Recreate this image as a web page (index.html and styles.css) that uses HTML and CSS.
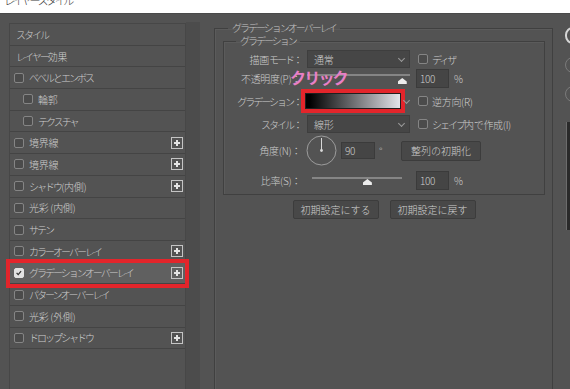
FILE: index.html
```html
<!DOCTYPE html>
<html lang="ja">
<head>
    <meta charset="UTF-8">
    <title>レイヤースタイル</title>
    <link rel="stylesheet" href="styles.css">
</head>
<body>
    <div class="titlebar"><span>レイヤースタイル</span></div>

    <div class="dialog">
        <aside class="sidebar">
            <ul class="fx-list">
                <li class="fx head">スタイル</li>
                <li class="fx head">レイヤー<span class="kj">効果</span></li>
                <li class="fx"><span class="cb"></span>ベベルとエンボス</li>
                <li class="fx sub"><span class="cb"></span><span class="kj">輪郭</span></li>
                <li class="fx sub"><span class="cb"></span>テクスチャ</li>
                <li class="fx"><span class="cb"></span><span class="kj">境界線</span><span class="plus"></span></li>
                <li class="fx"><span class="cb"></span><span class="kj">境界線</span><span class="plus"></span></li>
                <li class="fx"><span class="cb"></span><span>シャドウ <span class="kj">(内側)</span></span><span class="plus"></span></li>
                <li class="fx"><span class="cb"></span><span class="kj">光彩 (内側)</span></li>
                <li class="fx"><span class="cb"></span>サテン</li>
                <li class="fx"><span class="cb"></span>カラーオーバーレイ<span class="plus"></span></li>
                <li class="fx selected"><span class="cb checked"></span>グラデーションオーバーレイ<span class="plus"></span></li>
                <li class="fx"><span class="cb"></span>パターンオーバーレイ</li>
                <li class="fx"><span class="cb"></span><span class="kj">光彩 (外側)</span></li>
                <li class="fx"><span class="cb"></span>ドロップシャドウ<span class="plus"></span></li>
            </ul>
            <div class="gutter"></div>
        </aside>

        <main class="panel">
            <fieldset class="group outer">
                <legend class="kn">グラデーションオーバーレイ</legend>
                <fieldset class="group inner">
                    <legend class="kn">グラデーション</legend>

                    <div class="row r-mode">
                        <label class="lbl">描画<span class="kn">モード：</span></label>
                        <div class="select">通常<span class="chev"></span></div>
                        <span class="cb right"></span><span class="kn">ディザ</span>
                    </div>

                    <div class="row r-opacity">
                        <label class="lbl">不透明度(P)：</label>
                        <div class="slider wide"><span class="thumb" style="left: 92%"></span></div>
                        <div class="num">100</div>
                        <span class="unit">%</span>
                        <span class="note">クリック</span>
                    </div>

                    <div class="row r-grad">
                        <label class="lbl kn">グラデーション：</label>
                        <div class="grad-slot">
                            <div class="swatch"></div>
                            <span class="chev"></span>
                        </div>
                        <span class="cb right"></span><span>逆方向(R)</span>
                    </div>

                    <div class="row r-style">
                        <label class="lbl kn">スタイル：</label>
                        <div class="select">線形<span class="chev"></span></div>
                        <span class="cb right"></span><span><span class="kn">シェイプ</span>内で作成(I)</span>
                    </div>

                    <div class="row r-angle">
                        <label class="lbl">角度(N)：</label>
                        <svg class="dial" width="31" height="31" viewBox="0 0 31 31">
                            <circle cx="15.5" cy="15.5" r="14.5" fill="none" stroke="#9c9c9c" stroke-width="1"/>
                            <line x1="15.5" y1="15.5" x2="15.5" y2="3" stroke="#d8d8d8" stroke-width="1"/>
                            <circle cx="15.5" cy="15.5" r="1.4" fill="#d8d8d8"/>
                        </svg>
                        <div class="num angle">90</div>
                        <span class="deg">°</span>
                        <button class="btn reset">整列の初期化</button>
                    </div>

                    <div class="row r-scale">
                        <label class="lbl">比率(S)：</label>
                        <div class="slider narrow"><span class="thumb" style="left: 61%"></span></div>
                        <div class="num">100</div>
                        <span class="unit">%</span>
                    </div>
                </fieldset>

                <div class="defaults">
                    <button class="btn">初期設定にする</button>
                    <button class="btn">初期設定に戻す</button>
                </div>
            </fieldset>
        </main>

        <div class="side">
            <div class="side-btn ok"></div>
            <div class="side-btn"></div>
            <div class="side-btn"></div>
            <div class="preview"></div>
        </div>
    </div>
</body>
</html>
```

FILE: styles.css
```css
* {
    box-sizing: border-box;
}
body {
    margin: 0;
    width: 570px;
    height: 389px;
    overflow: hidden;
    background: #535353;
    font-family: "Noto Sans CJK JP", "Noto Sans", sans-serif;
    font-size: 10px;
    font-weight: 300;
    color: #cdcdcd;
    letter-spacing: -0.3px;
}
/* katakana runs are set much narrower than kanji in the original UI font */
.kn {
    letter-spacing: -2px;
}
.kj {
    letter-spacing: -0.3px;
}
.titlebar {
    height: 14px;
    background: #fff;
    overflow: hidden;
    padding-left: 4px;
    border-bottom: 1px solid #4a4a4a;
}
.titlebar span {
    display: block;
    margin-top: -7px;
    font-size: 11px;
    line-height: 14px;
    color: #3c3c3c;
    letter-spacing: -2.4px;
}
.dialog {
    display: flex;
    height: 375px;
}

/* effects list */
.sidebar {
    width: 200px;
    display: flex;
    padding: 9px 0 0 9px;
    flex-shrink: 0;
}
.fx-list {
    list-style: none;
    margin: 0;
    padding: 0;
    width: 177px;
    border: 1px solid #474747;
    border-bottom: none;
}
.fx {
    height: 21.7px;
    display: flex;
    align-items: center;
    padding: 0 2px 0 4px;
    border-bottom: 1px solid #444;
    white-space: nowrap;
    letter-spacing: -2px;
}
.fx .kj {
    letter-spacing: -0.3px;
}
.fx.head {
    padding-left: 6px;
}
.fx.sub {
    padding-left: 13px;
}
.fx.selected {
    background: #606060;
    outline: 4px solid #e3252b;
    position: relative;
}
.cb {
    width: 10px;
    height: 10px;
    border: 1px solid #858585;
    border-radius: 2px;
    background: #4b4b4b;
    flex-shrink: 0;
}
.fx .cb {
    margin-right: 5px;
}
.cb.checked {
    background: #e2e2e2 url("data:image/svg+xml,%3Csvg xmlns='http://www.w3.org/2000/svg' width='10' height='10'%3E%3Cpath d='M2 4.8 L4 7 L7.6 2.6' fill='none' stroke='%23333' stroke-width='1.6'/%3E%3C/svg%3E") center/8px 8px no-repeat;
    border-color: #e2e2e2;
}
.plus {
    margin-left: auto;
    width: 12px;
    height: 12px;
    border: 1px solid #c4c4c4;
    background:
        linear-gradient(#e4e4e4, #e4e4e4) center/6px 2px no-repeat,
        linear-gradient(#e4e4e4, #e4e4e4) center/2px 6px no-repeat;
}
.gutter {
    width: 14px;
    margin-top: -1px;
    background: #4c4c4c;
}

/* settings panel */
.panel {
    margin: 8px 0 0 14px;
    width: 339px;
    flex-shrink: 0;
}
.group {
    margin: 0;
    border: 1px solid #404040;
    box-shadow: inset 1px 1px 0 #5b5b5b;
}
.group legend {
    line-height: 12px;
    padding: 0 4px;
    color: #c4c4c4;
}
.outer {
    height: 420px;
    padding: 0 7px 0 8px;
}
.outer > legend {
    margin-left: 5px;
}
.inner {
    margin-top: 1px;
    padding: 3px 0 4px 0;
}
.inner > legend {
    margin-left: 12px;
}
.row {
    display: flex;
    align-items: center;
    white-space: nowrap;
}
.lbl {
    width: 81px;
    padding-right: 4px;
    text-align: right;
    flex-shrink: 0;
}
.r-mode, .r-style {
    height: 18px;
}
.r-opacity {
    height: 20px;
    position: relative;
}
.r-grad {
    height: 24px;
    margin-top: 1px;
}
.r-style {
    margin-top: 2px;
}
.r-angle {
    height: 31px;
    margin-top: 2px;
}
.r-scale {
    height: 19px;
    margin-top: 5px;
}
.select {
    margin-left: 2px;
    width: 103px;
    height: 18px;
    background: #464646;
    border: 1px solid #3e3e3e;
    display: flex;
    align-items: center;
    padding-left: 6px;
}
.chev {
    margin-left: auto;
    margin-right: 5px;
    width: 5px;
    height: 5px;
    border-right: 1px solid #9a9a9a;
    border-bottom: 1px solid #9a9a9a;
    transform: translateY(-1px) rotate(45deg);
}
.cb.right {
    margin: 0 4px 0 8px;
}
.slider {
    position: relative;
    height: 100%;
}
.slider::before {
    content: "";
    position: absolute;
    left: 0;
    right: 0;
    top: 6px;
    height: 2px;
    background: #858585;
}
.slider.wide {
    margin-left: 2px;
    width: 103px;
}
.slider.narrow {
    margin-left: 7px;
    width: 90px;
}
.thumb {
    position: absolute;
    top: 10px;
    width: 9px;
    height: 6px;
    margin-left: -4px;
    background: #ececec;
    clip-path: polygon(50% 0, 100% 60%, 100% 100%, 0 100%, 0 60%);
}
.r-scale .thumb {
    top: 8px;
}
.num {
    margin-left: 6px;
    width: 33px;
    height: 19px;
    background: #454545;
    border: 1px solid #3b3b3b;
    padding-left: 3px;
    line-height: 17px;
}
.r-scale .num {
    margin-left: 14px;
}
.num.angle {
    margin-left: 4px;
    width: 34px;
    height: 17px;
    line-height: 15px;
}
.unit {
    margin-left: 5px;
}
.deg {
    margin-left: 4px;
    width: 10px;
}
.note {
    position: absolute;
    left: 66px;
    top: -1px;
    font-size: 16px;
    line-height: 20px;
    font-weight: bold;
    letter-spacing: -1.8px;
    color: #e97fc6;
}
.grad-slot {
    width: 105px;
    display: flex;
    align-items: center;
}
.swatch {
    width: 96px;
    height: 16px;
    border: 1px solid #1f1f1f;
    background: linear-gradient(to right, #000 4%, #e4e4ea 100%);
    outline: 4px solid #e3252b;
}
.grad-slot .chev {
    margin-right: 1px;
}
.dial {
    margin-left: 1px;
}
.btn {
    font: inherit;
    color: #d0d0d0;
    background: #484848;
    border: 1px solid #3c3c3c;
    border-radius: 2px;
    height: 19px;
    padding: 0;
}
.btn.reset {
    margin-left: 12px;
    width: 80px;
    height: 20px;
}
.defaults {
    display: flex;
    justify-content: center;
    gap: 11px;
    margin-top: 5px;
}
.defaults .btn {
    width: 86px;
}

/* OK / cancel column, cut off at the window edge */
.side {
    margin: 13px 0 0 12px;
    width: 60px;
    flex-shrink: 0;
}
.side-btn {
    width: 60px;
    height: 16px;
    border: 1px solid #7a7a7a;
    border-radius: 8px;
    margin-bottom: 13px;
}
.side-btn.ok {
    border: 2px solid #d6d6d6;
    height: 17px;
}
.preview {
    margin: 20px 0 0 1px;
    height: 108px;
    background: #2a2a2a;
    border-left: 1px solid #6c6c6c;
}
```
